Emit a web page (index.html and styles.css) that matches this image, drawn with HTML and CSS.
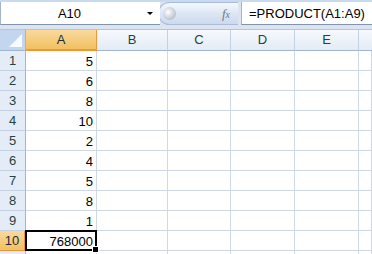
FILE: index.html
```html
<!DOCTYPE html>
<html lang="en">
<head>
    <meta charset="UTF-8">
    <title>Book1</title>
    <link rel="stylesheet" href="styles.css">
</head>
<body>
    <div class="formula-bar">
        <div class="name-box">
            <span class="name">A10</span>
            <span class="arrow"></span>
        </div>
        <div class="pill">
            <span class="knob"></span>
            <span class="fx">f<small>x</small></span>
        </div>
        <div class="formula">=PRODUCT(A1:A9)</div>
    </div>
    <div class="sheet">
        <div class="corner"><span class="tri"></span></div>
        <div class="col-head selected">A</div>
        <div class="col-head">B</div>
        <div class="col-head">C</div>
        <div class="col-head">D</div>
        <div class="col-head">E</div>
        <div class="col-head last"></div>

        <div class="row-head">1</div><div class="cell num">5</div><div class="cell"></div><div class="cell"></div><div class="cell"></div><div class="cell"></div><div class="cell"></div>
        <div class="row-head">2</div><div class="cell num">6</div><div class="cell"></div><div class="cell"></div><div class="cell"></div><div class="cell"></div><div class="cell"></div>
        <div class="row-head">3</div><div class="cell num">8</div><div class="cell"></div><div class="cell"></div><div class="cell"></div><div class="cell"></div><div class="cell"></div>
        <div class="row-head">4</div><div class="cell num">10</div><div class="cell"></div><div class="cell"></div><div class="cell"></div><div class="cell"></div><div class="cell"></div>
        <div class="row-head">5</div><div class="cell num">2</div><div class="cell"></div><div class="cell"></div><div class="cell"></div><div class="cell"></div><div class="cell"></div>
        <div class="row-head">6</div><div class="cell num">4</div><div class="cell"></div><div class="cell"></div><div class="cell"></div><div class="cell"></div><div class="cell"></div>
        <div class="row-head">7</div><div class="cell num">5</div><div class="cell"></div><div class="cell"></div><div class="cell"></div><div class="cell"></div><div class="cell"></div>
        <div class="row-head">8</div><div class="cell num">8</div><div class="cell"></div><div class="cell"></div><div class="cell"></div><div class="cell"></div><div class="cell"></div>
        <div class="row-head">9</div><div class="cell num">1</div><div class="cell"></div><div class="cell"></div><div class="cell"></div><div class="cell"></div><div class="cell"></div>
        <div class="row-head selected">10</div><div class="cell num active">768000</div><div class="cell"></div><div class="cell"></div><div class="cell"></div><div class="cell"></div><div class="cell"></div>
        <div class="row-head"></div><div class="cell"></div><div class="cell"></div><div class="cell"></div><div class="cell"></div><div class="cell"></div><div class="cell"></div>
    </div>
</body>
</html>
```

FILE: styles.css
```css
html, body {
    margin: 0;
    height: 100%;
    overflow: hidden;
}

body {
    font-family: "Liberation Sans", Arial, sans-serif;
    font-size: 13px;
    color: #000;
    background: #fff;
}

.formula-bar {
    display: flex;
    height: 30px;
    box-sizing: border-box;
    padding-top: 2px;
    background: linear-gradient(#c9daf0 0, #c9daf0 2px, #dbe4f0 2px);
    border-bottom: 1px solid #b4c4d9;
}

.name-box {
    width: 160px;
    height: 23px;
    box-sizing: border-box;
    background: #fff;
    border-left: 1px solid #a5b5c9;
    border-bottom: 1px solid #7f93ad;
    display: flex;
    align-items: center;
    position: relative;
}

.name {
    flex: 1;
    text-align: center;
    padding-right: 22px;
}

.arrow {
    position: absolute;
    left: 146px;
    top: 10px;
    border-left: 3px solid transparent;
    border-right: 3px solid transparent;
    border-top: 3px solid #000;
}

.pill {
    width: 80px;
    height: 23px;
    box-sizing: border-box;
    margin-left: -2px;
    border: 1px solid #a9bdd6;
    border-right: none;
    border-radius: 12px 0 0 12px;
    background: linear-gradient(#f4f8fd, #dce7f5 50%, #cbdaee);
    display: flex;
    align-items: center;
    justify-content: space-between;
    padding: 0 8px 0 4px;
}

.knob {
    width: 13px;
    height: 13px;
    border-radius: 50%;
    background: radial-gradient(circle at 40% 40%, #ffffff, #b9c3cf 70%, #9aa6b4);
}

.fx {
    font-family: "Liberation Serif", "Times New Roman", serif;
    font-style: italic;
    font-size: 13px;
    color: #6e7887;
}

.fx small {
    font-size: 10px;
}

.formula {
    flex: 1;
    height: 23px;
    box-sizing: border-box;
    margin-left: 3px;
    background: #fff;
    border-left: 1px solid #a5b5c9;
    border-bottom: 1px solid #7f93ad;
    padding: 4px 0 0 7px;
    white-space: nowrap;
}

.sheet {
    display: grid;
    grid-template-columns: 26px 71px 71px 63px 64px 64px 1fr;
    grid-template-rows: 21px;
    grid-auto-rows: 20px;
}

.sheet > div {
    box-sizing: border-box;
    border-right: 1px solid #d0d7e5;
    border-bottom: 1px solid #d0d7e5;
}

.corner {
    background: #c4d6ee;
    border-right: 1px solid #9eb6ce !important;
    border-bottom: 1px solid #9eb6ce !important;
    position: relative;
}

.tri {
    position: absolute;
    right: 3px;
    bottom: 3px;
    border-left: 13px solid transparent;
    border-bottom: 13px solid #f7fafe;
}

.col-head {
    background: linear-gradient(#f6f9fd, #e4ebf5);
    border-right-color: #c5d1e0 !important;
    border-bottom-color: #9eb6ce !important;
    color: #27413e;
    text-align: center;
    line-height: 20px;
}

.col-head.last {
    border-right: none !important;
}

.row-head {
    background: #e4ecf7;
    border-right-color: #9eb6ce !important;
    border-bottom-color: #c5d1e0 !important;
    color: #27413e;
    text-align: center;
    line-height: 19px;
}

.col-head.selected,
.row-head.selected {
    background: linear-gradient(#f9d99f, #f1c15f);
    color: #1c2b3a;
}

.col-head.selected {
    border-bottom: 2px solid #f29536 !important;
    border-right-color: #f29536 !important;
}

.row-head.selected {
    border-right: 2px solid #f29536 !important;
    border-bottom-color: #f29536 !important;
}

.cell.num {
    text-align: right;
    padding-right: 3px;
    line-height: 21px;
}

.cell.active {
    position: relative;
}

.cell.active::after {
    content: "";
    position: absolute;
    left: -1px;
    top: -1px;
    right: -1px;
    bottom: -1px;
    border: 2px solid #000;
}

.cell.active::before {
    content: "";
    position: absolute;
    right: -3px;
    bottom: -3px;
    width: 5px;
    height: 5px;
    background: #000;
    border: 1px solid #fff;
    z-index: 1;
}
```
